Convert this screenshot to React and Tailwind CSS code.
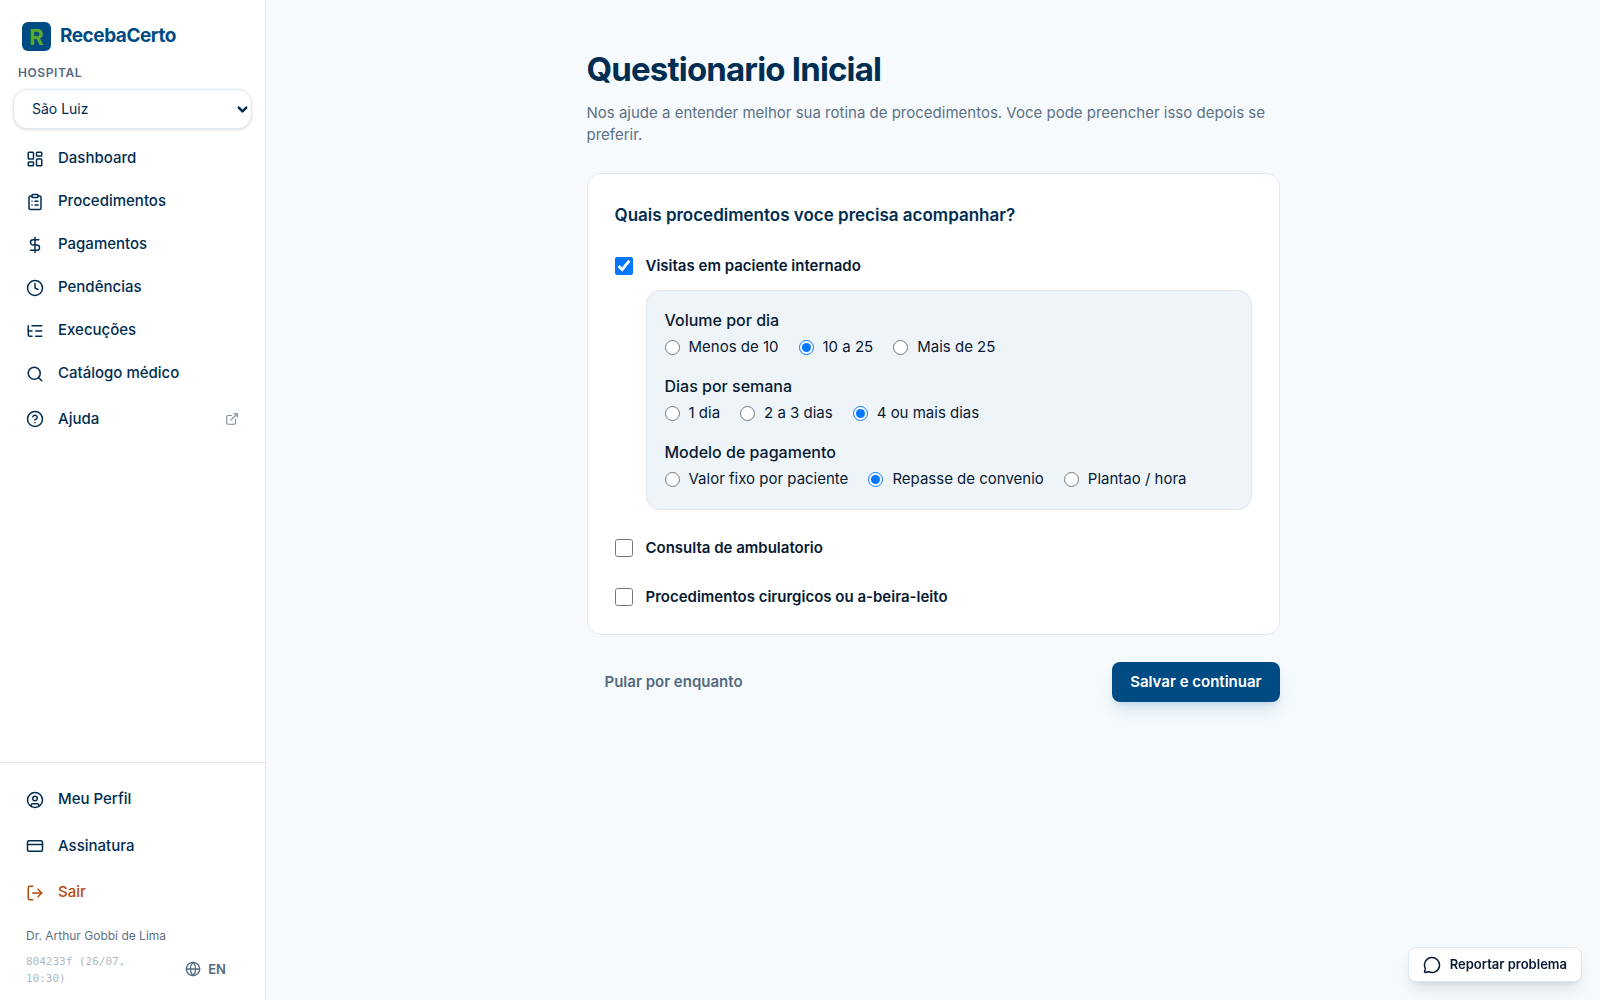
import { useState } from "react";
import {
  ChevronDown,
  CircleHelp,
  CircleUser,
  ClipboardList,
  Clock,
  CreditCard,
  DollarSign,
  ExternalLink,
  Globe,
  LayoutDashboard,
  ListTree,
  LogOut,
  MessageCircle,
  Search,
} from "lucide-react";

const navItems = [
  { id: "dashboard", label: "Dashboard", icon: LayoutDashboard },
  { id: "procedimentos", label: "Procedimentos", icon: ClipboardList },
  { id: "pagamentos", label: "Pagamentos", icon: DollarSign },
  { id: "pendencias", label: "Pendências", icon: Clock },
  { id: "execucoes", label: "Execuções", icon: ListTree },
  { id: "catalogo", label: "Catálogo médico", icon: Search },
];

const visitQuestions = [
  {
    id: "volume",
    title: "Volume por dia",
    options: ["Menos de 10", "10 a 25", "Mais de 25"],
  },
  {
    id: "dias",
    title: "Dias por semana",
    options: ["1 dia", "2 a 3 dias", "4 ou mais dias"],
  },
  {
    id: "modelo",
    title: "Modelo de pagamento",
    options: ["Valor fixo por paciente", "Repasse de convenio", "Plantao / hora"],
  },
];

function Sidebar() {
  return (
    <aside className="w-[266px] shrink-0 flex flex-col bg-white border-r border-[#e1eaf2] text-[#002d52]">
      {/* Brand */}
      <a href="#" className="flex items-start gap-[9px] px-[22px] pt-[22px]">
        <span className="w-[29px] h-[29px] rounded-md bg-[#004b84] text-[#58a82c] flex items-center justify-center text-[22px] leading-none font-bold">
          R
        </span>
        <span className="text-[19px] leading-[27px] font-bold tracking-tight text-[#004b84]">
          RecebaCerto
        </span>
      </a>

      {/* Hospital */}
      <div className="flex flex-col gap-[7px] px-[13px] pt-[13px]">
        <label
          htmlFor="hospital"
          className="px-[5px] text-xs leading-[18px] font-semibold tracking-wider uppercase text-[#546a80]"
        >
          Hospital
        </label>
        <div className="relative">
          <select
            id="hospital"
            className="appearance-none w-full h-10 pl-[18px] pr-8 rounded-[14px] border border-[#dfe9f1] bg-white text-sm shadow-sm"
          >
            <option>São Luiz</option>
          </select>
          <ChevronDown
            strokeWidth={4}
            className="absolute right-[2px] top-[13px] w-[15px] h-[15px] pointer-events-none"
          />
        </div>
      </div>

      <nav className="flex flex-col px-[26px] pt-2 text-[15px] font-medium">
        {navItems.map((item) => (
          <a key={item.id} href="#" className="h-[43px] flex items-center gap-[14px]">
            <item.icon className="w-[18px] h-[18px]" />
            {item.label}
          </a>
        ))}
        <a href="#" className="h-12 flex items-center gap-[14px]">
          <CircleHelp className="w-[18px] h-[18px]" />
          <span className="flex-1">Ajuda</span>
          <ExternalLink className="w-[14px] h-[14px] text-[#7b90a3]" />
        </a>
      </nav>

      {/* Account */}
      <div className="mt-auto border-t border-[#e1eaf2] px-[26px] py-[13px]">
        <div className="flex flex-col text-[15px] font-medium">
          <a href="#" className="h-[47px] flex items-center gap-[14px]">
            <CircleUser className="w-[18px] h-[18px]" />
            Meu Perfil
          </a>
          <a href="#" className="h-[46px] flex items-center gap-[14px]">
            <CreditCard className="w-[18px] h-[18px]" />
            Assinatura
          </a>
          <button className="h-[47px] flex items-center gap-[14px] text-[#b94a0e]">
            <LogOut className="w-[18px] h-[18px]" />
            Sair
          </button>
        </div>
        <p className="pt-[11px] text-xs leading-[18px] text-[#5c7186]">
          Dr. Arthur Gobbi de Lima
        </p>
        <div className="flex items-start justify-between pt-2 pr-[13px]">
          <p className="w-[112px] font-['DejaVu_Sans_Mono',monospace] text-[11px] leading-[17px] text-[#aeb9c4]">
            804233f (26/07, 10:30)
          </p>
          <button className="flex items-center gap-[7px] text-[13px] leading-8 font-semibold text-[#546a80]">
            <Globe className="w-4 h-4" />
            EN
          </button>
        </div>
      </div>
    </aside>
  );
}

function RadioGroup({ question, value, onChange }) {
  return (
    <fieldset>
      <legend className="text-base leading-[22px] font-medium">{question.title}</legend>
      <div className="flex flex-wrap gap-x-5 pt-[5px]">
        {question.options.map((option) => (
          <label key={option} className="flex items-center gap-[9px] text-[15px] leading-[22px]">
            <input
              type="radio"
              name={question.id}
              className="w-[15px] h-[15px]"
              checked={value === option}
              onChange={() => onChange(option)}
            />
            {option}
          </label>
        ))}
      </div>
    </fieldset>
  );
}

function Procedure({ label, checked, onChange }) {
  return (
    <label className="flex items-center gap-[13px] text-[15px] leading-[22px] font-semibold">
      <input
        type="checkbox"
        className="w-[18px] h-[18px]"
        checked={checked}
        onChange={(e) => onChange(e.target.checked)}
      />
      {label}
    </label>
  );
}

export default function App() {
  const [visits, setVisits] = useState(true);
  const [clinic, setClinic] = useState(false);
  const [surgery, setSurgery] = useState(false);
  const [answers, setAnswers] = useState({
    volume: "10 a 25",
    dias: "4 ou mais dias",
    modelo: "Repasse de convenio",
  });

  return (
    <div className="min-h-screen flex bg-[#f6fafd] font-['Inter',sans-serif] text-[#071a33]">
      <Sidebar />

      <main className="flex-1 px-9">
        <div className="max-w-[693px] mx-auto pt-[47px]">
          <h1 className="text-[33px] leading-[45px] font-bold tracking-tight text-[#002d52]">
            Questionario Inicial
          </h1>
          <p className="mt-[10px] text-[15px] leading-[22px] text-[#5c7186]">
            Nos ajude a entender melhor sua rotina de procedimentos. Voce pode
            preencher isso depois se preferir.
          </p>

          <section className="mt-[27px] px-[27px] pt-7 pb-[26px] rounded-[14px] border border-[#e1eaf2] bg-white">
            <h2 className="text-[17px] leading-[26px] font-semibold text-[#002d52]">
              Quais procedimentos voce precisa acompanhar?
            </h2>

            <div className="flex flex-col gap-[27px] pt-[27px]">
              <div>
                <Procedure
                  label="Visitas em paciente internado"
                  checked={visits}
                  onChange={setVisits}
                />
                {visits && (
                  <div className="ml-[31px] mt-[13px] px-[18px] pt-[18px] pb-[19px] flex flex-col gap-[17px] rounded-[14px] border border-[#dfe9f1] bg-[#eff4f9]">
                    {visitQuestions.map((q) => (
                      <RadioGroup
                        key={q.id}
                        question={q}
                        value={answers[q.id]}
                        onChange={(v) => setAnswers({ ...answers, [q.id]: v })}
                      />
                    ))}
                  </div>
                )}
              </div>
              <Procedure
                label="Consulta de ambulatorio"
                checked={clinic}
                onChange={setClinic}
              />
              <Procedure
                label="Procedimentos cirurgicos ou a-beira-leito"
                checked={surgery}
                onChange={setSurgery}
              />
            </div>
          </section>

          <div className="flex items-center justify-between pt-[27px] text-[15px] font-semibold">
            <button className="h-10 px-[18px] text-[#546a80]">Pular por enquanto</button>
            <button className="h-10 px-[18px] rounded-lg bg-[#004b84] text-white shadow-lg shadow-[#004b84]/15">
              Salvar e continuar
            </button>
          </div>
        </div>
      </main>

      {/* Feedback */}
      <button className="fixed right-[18px] bottom-[18px] h-[35px] px-[14px] flex items-center gap-[9px] rounded-lg border border-[#dfe9f1] bg-white text-[13px] font-semibold shadow-lg">
        <MessageCircle className="w-[18px] h-[18px]" />
        Reportar problema
      </button>
    </div>
  );
}
